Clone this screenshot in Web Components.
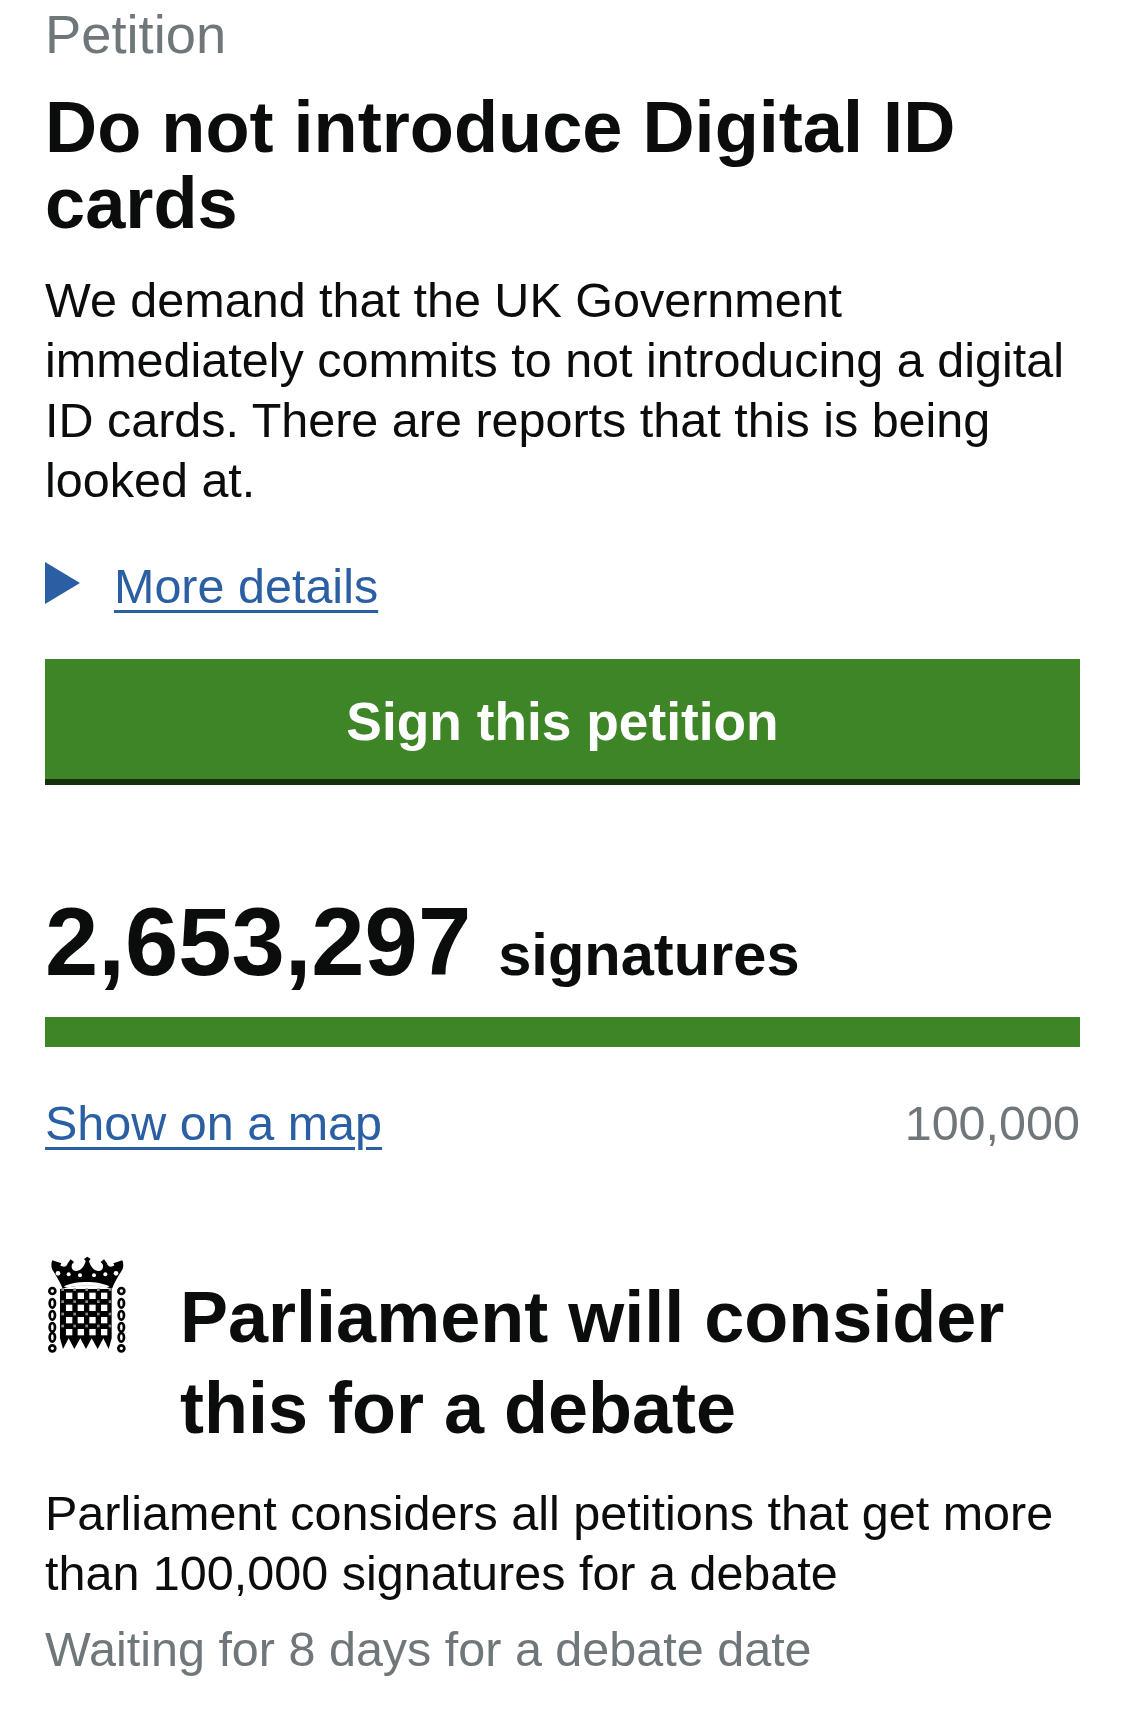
<!DOCTYPE html>
<html lang="en">
<head>
<meta charset="utf-8">
<title>Do not introduce Digital ID cards</title>
<style>
  html, body { margin: 0; background: #fff; }
  body { font-family: "Liberation Sans", Arial, sans-serif; color: #0b0c0c; }
</style>
</head>
<body>
<petition-page>
  <petition-header caption="Petition" heading="Do not introduce Digital ID cards">
    We demand that the UK Government immediately commits to not introducing a digital ID cards. There are reports that this is being looked at.
  </petition-header>
  <details-toggle>More details</details-toggle>
  <sign-button>Sign this petition</sign-button>
  <signature-count count="2,653,297" label="signatures"></signature-count>
  <signature-progress threshold="100,000">Show on a map</signature-progress>
  <debate-status heading="Parliament will consider this for a debate" note="Waiting for 8 days for a debate date">
    Parliament considers all petitions that get more than 100,000 signatures for a debate
  </debate-status>
</petition-page>

<script>
'use strict';
class PetitionPage extends HTMLElement {
    constructor() {
        super();
        this.attachShadow({ mode: 'open' });
        this.shadowRoot.innerHTML = `
            <style>
                :host {
                    display: flex;
                    flex-direction: column;
                    padding: 0 45px;
                    box-sizing: border-box;
                    width: 1125px;
                    height: 1724px;
                    overflow: hidden;
                }
            </style>
            <slot></slot>
        `;
    }
}
customElements.define('petition-page', PetitionPage);

class PetitionHeader extends HTMLElement {
    constructor() {
        super();
        this.attachShadow({ mode: 'open' });
        this.shadowRoot.innerHTML = `
            <style>
                :host { display: block; }
                #caption {
                    color: #6f777b;
                    font-size: 54.3px;
                    line-height: 60px;
                    margin-top: 5px;
                }
                h1 {
                    font-size: 72.2px;
                    line-height: 76px;
                    font-weight: 700;
                    margin: 24px 0 0;
                }
                p {
                    font-size: 48.5px;
                    line-height: 60px;
                    margin: 29px 0 0;
                }
            </style>
            <div id="caption">${this.getAttribute('caption')}</div>
            <h1>${this.getAttribute('heading')}</h1>
            <p><slot></slot></p>
        `;
    }
}
customElements.define('petition-header', PetitionHeader);

class DetailsToggle extends HTMLElement {
    constructor() {
        super();
        this.attachShadow({ mode: 'open' });
        this.shadowRoot.innerHTML = `
            <style>
                :host {
                    display: flex;
                    align-items: center;
                    gap: 34px;
                    margin-top: 46px;
                    height: 60px;
                }
                #arrow {
                    width: 0;
                    height: 0;
                    margin-bottom: 6px;
                    border-style: solid;
                    border-width: 21px 0 21px 35px;
                    border-color: transparent transparent transparent #2b5fa3;
                }
                a {
                    color: #2b5fa3;
                    font-size: 48.5px;
                    line-height: 60px;
                    text-decoration: underline;
                    text-decoration-thickness: 3px;
                    text-underline-offset: 7px;
                }
            </style>
            <span id="arrow"></span>
            <a href="#"><slot></slot></a>
        `;
    }
}
customElements.define('details-toggle', DetailsToggle);

class SignButton extends HTMLElement {
    constructor() {
        super();
        this.attachShadow({ mode: 'open' });
        this.shadowRoot.innerHTML = `
            <style>
                :host {
                    display: flex;
                    align-items: center;
                    justify-content: center;
                    box-sizing: border-box;
                    height: 126px;
                    margin-top: 43px;
                    padding-top: 4px;
                    background: #3d8526;
                    border-bottom: 6px solid #15300c;
                    color: #fff;
                    font-size: 53.3px;
                    font-weight: 700;
                }
            </style>
            <slot></slot>
        `;
    }
}
customElements.define('sign-button', SignButton);

class SignatureCount extends HTMLElement {
    constructor() {
        super();
        this.attachShadow({ mode: 'open' });
        this.shadowRoot.innerHTML = `
            <style>
                :host {
                    display: flex;
                    align-items: baseline;
                    gap: 27px;
                    margin-top: 112px;
                    font-weight: 700;
                    line-height: 90px;
                }
                #count { font-size: 95.8px; }
                #label { font-size: 59.6px; }
            </style>
            <span id="count">${this.getAttribute('count')}</span>
            <span id="label">${this.getAttribute('label')}</span>
        `;
    }
}
customElements.define('signature-count', SignatureCount);

class SignatureProgress extends HTMLElement {
    constructor() {
        super();
        this.attachShadow({ mode: 'open' });
        this.shadowRoot.innerHTML = `
            <style>
                :host { display: block; margin-top: 17px; }
                #bar { height: 30px; background: #3d8526; }
                #row {
                    display: flex;
                    justify-content: space-between;
                    margin-top: 46px;
                    font-size: 48.5px;
                    line-height: 60px;
                }
                a {
                    color: #2b5fa3;
                    text-decoration: underline;
                    text-decoration-thickness: 3px;
                    text-underline-offset: 7px;
                }
                #threshold { color: #6f777b; }
            </style>
            <div id="bar"></div>
            <div id="row">
                <a href="#"><slot></slot></a>
                <span id="threshold">${this.getAttribute('threshold')}</span>
            </div>
        `;
    }
}
customElements.define('signature-progress', SignatureProgress);

class PortcullisIcon extends HTMLElement {
    constructor() {
        super();
        this.attachShadow({ mode: 'open' });
        let squares = '';
        let studs = '';
        for (const x of [108, 143, 178, 213]) {
            for (const y of [158, 194, 231, 267]) {
                squares += `<rect x="${x}" y="${y}" width="19" height="19"/>`;
            }
        }
        for (const x of [98, 134, 170, 205, 240]) {
            for (const y of [149, 185, 222, 258]) {
                studs += `<rect x="${x - 4}" y="${y - 4}" width="8" height="8"/>`;
            }
        }
        let links = '';
        for (const cx of [67, 274]) {
            [153, 325].forEach(cy => {
                links += `<circle cx="${cx}" cy="${cy}" r="9"/>`;
            });
            [190, 226, 262, 292].forEach(cy => {
                links += `<ellipse cx="${cx}" cy="${cy}" rx="8" ry="13"/>`;
            });
        }
        this.shadowRoot.innerHTML = `
            <style>
                :host { display: block; width: 120px; height: 120px; }
                svg { display: block; }
            </style>
            <svg width="120" height="120" viewBox="0 0 360 360">
                <path fill="#000" d="M172 50l10 7-5 6c4 16 14 28 27 30 11 1 18-8 14-20l-6-7 10-8 9 12c2 10 12 14 22 6l-3-6 27-9c5 12 3 24-3 33-10 16-20 32-28 52-40-14-108-14-148 0-8-20-18-36-28-52-6-9-8-21-3-33l27 9-3 6c10 8 20 4 22-6l9-12 10 8-6 7c-4 12 3 21 14 20 13-2 23-14 27-30l-5-6z"/>
                <path fill="#fff" d="M102 139c34-17 102-17 136 0-4 3-8 4-11 4-28-9-86-9-114 0-3 0-7-1-11-4z"/>
                <g fill="#fff">
                    <circle cx="84" cy="100" r="7"/><circle cx="116" cy="103" r="6"/><circle cx="150" cy="106" r="6"/>
                    <circle cx="192" cy="106" r="6"/><circle cx="226" cy="103" r="6"/><circle cx="258" cy="100" r="7"/>
                </g>
                <path fill="#000" d="M90 147h155v148l-9 32-16-32-17 32-18-32-17 32-17-32-18 32-17-32-17 32-9-32z"/>
                <g fill="#fff">${squares}</g>
                <g fill="#8a8a8a">${studs}</g>
                <g fill="none" stroke="#000" stroke-width="8">${links}</g>
            </svg>
        `;
    }
}
customElements.define('portcullis-icon', PortcullisIcon);

class DebateStatus extends HTMLElement {
    constructor() {
        super();
        this.attachShadow({ mode: 'open' });
        this.shadowRoot.innerHTML = `
            <style>
                :host { display: block; margin-top: 96px; }
                #head {
                    display: flex;
                    gap: 15px;
                }
                portcullis-icon { margin: -9px 0 0 -15px; flex: none; width: 135px; }
                h2 {
                    font-size: 72px;
                    line-height: 91px;
                    font-weight: 700;
                    margin: 0;
                    padding-top: 23px;
                }
                p {
                    font-size: 48.5px;
                    line-height: 60px;
                    margin: 29px 0 0;
                }
                #note {
                    color: #6f777b;
                    font-size: 48.5px;
                    line-height: 60px;
                    margin-top: 16px;
                }
            </style>
            <div id="head">
                <portcullis-icon></portcullis-icon>
                <h2>${this.getAttribute('heading')}</h2>
            </div>
            <p><slot></slot></p>
            <div id="note">${this.getAttribute('note')}</div>
        `;
    }
}
customElements.define('debate-status', DebateStatus);
</script>
</body>
</html>
